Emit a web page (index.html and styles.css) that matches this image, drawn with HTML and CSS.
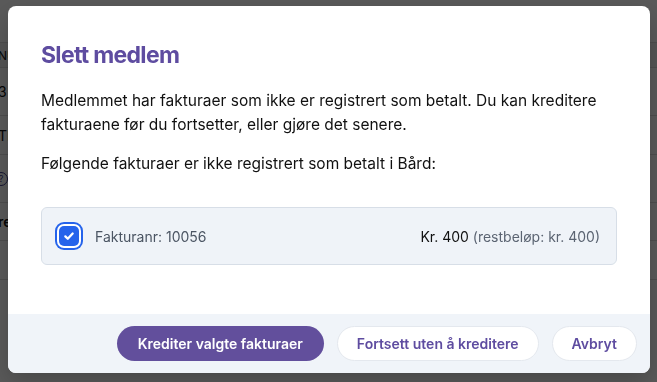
FILE: index.html
```html
<!DOCTYPE html>
<html lang="no">
<head>
  <meta charset="UTF-8">
  <meta name="viewport" content="width=device-width, initial-scale=1.0">
  <title>Slett medlem</title>
  <link rel="stylesheet" href="styles.css">
</head>
<body>
  <div class="page">
    <div class="row row-top"></div>
    <div class="row row-head">NUMMER</div>
    <div class="row row-tall">3</div>
    <div class="row">TI</div>
    <div class="row row-tall"><span class="help">?</span></div>
    <div class="row row-mid">re</div>
    <div class="row"></div>
  </div>

  <div class="backdrop"></div>

  <div class="modal">
    <div class="modal-body">
      <h2 class="modal-title">Slett medlem</h2>
      <p>Medlemmet har fakturaer som ikke er registrert som betalt. Du kan kreditere fakturaene før du fortsetter, eller gjøre det senere.</p>
      <p>Følgende fakturaer er ikke registrert som betalt i Bård:</p>

      <div class="invoice">
        <label class="invoice-check">
          <span class="checkbox">
            <svg viewBox="0 0 16 16" width="14" height="14"><path d="M3.8 8.4l2.8 2.8 5.6-6" fill="none" stroke="#fff" stroke-width="2.6" stroke-linecap="round" stroke-linejoin="round"/></svg>
          </span>
          <span class="invoice-no">Fakturanr: 10056</span>
        </label>
        <div class="invoice-amount">Kr. 400 <span class="rest">(restbeløp: kr. 400)</span></div>
      </div>
    </div>

    <div class="modal-footer">
      <button class="btn btn-primary">Krediter valgte fakturaer</button>
      <button class="btn btn-secondary">Fortsett uten å kreditere</button>
      <button class="btn btn-secondary">Avbryt</button>
    </div>
  </div>
</body>
</html>
```

FILE: styles.css
```css
body {
  margin: 0;
  font-family: Inter, "Noto Sans", sans-serif;
  background: #ffffff;
  color: #111111;
  height: 382px;
  overflow: hidden;
}

.page {
  font-size: 14px;
}

.row {
  height: 38px;
  border-bottom: 1px solid #dcdcdc;
  display: flex;
  align-items: center;
  margin-left: -2px;
}

.row-top {
  height: 42px;
}

.row-head {
  height: 24px;
  background: #f1f1f1;
  font-size: 12px;
}

.row-tall {
  height: 47px;
}

.row-mid {
  height: 37px;
  font-weight: 600;
}

.help {
  width: 12px;
  height: 12px;
  border: 1px solid #3b3b8a;
  border-radius: 50%;
  font-size: 9px;
  display: inline-flex;
  justify-content: center;
  align-items: center;
  margin-left: -4px;
  color: #3b3b8a;
}

.backdrop {
  position: fixed;
  inset: 0;
  background: rgba(0, 0, 0, 0.65);
}

.modal {
  position: fixed;
  top: 6px;
  left: 8px;
  width: 642px;
  height: 367px;
  background: #ffffff;
  border-radius: 8px;
  overflow: hidden;
  display: flex;
  flex-direction: column;
  box-shadow: 0 10px 25px rgba(0, 0, 0, 0.2);
}

.modal-body {
  flex: 1;
  padding: 35px 33px 0 33px;
}

.modal-title {
  margin: 0 0 20px;
  font-size: 23px;
  line-height: 28px;
  font-weight: 700;
  letter-spacing: -0.7px;
  color: #5e4ca0;
}

.modal-body p {
  margin: 0 0 15px;
  font-size: 15.5px;
  line-height: 24px;
  color: #111111;
}

.invoice {
  margin-top: 31px;
  box-sizing: border-box;
  height: 58px;
  background: #eff3f8;
  border: 1px solid #d7dee7;
  border-radius: 6px;
  display: flex;
  align-items: center;
  justify-content: space-between;
  padding: 0 16px;
}

.invoice-check {
  display: flex;
  align-items: center;
  gap: 16px;
}

.checkbox {
  width: 20px;
  height: 20px;
  margin-left: 1px;
  border-radius: 5px;
  background: #2563eb;
  box-shadow: 0 0 0 2px #ffffff, 0 0 0 4px #2563eb;
  display: flex;
  justify-content: center;
  align-items: center;
}

.invoice-no {
  font-size: 14px;
  color: #4b5563;
}

.invoice-amount {
  font-size: 14px;
  color: #111111;
}

.rest {
  color: #5b6472;
}

.modal-footer {
  height: 59px;
  background: #f0f4f9;
  display: flex;
  justify-content: flex-end;
  align-items: center;
  gap: 13px;
  padding: 0 13px;
}

.btn {
  height: 35px;
  border-radius: 18px;
  font-family: Inter, "Noto Sans", sans-serif;
  font-size: 14px;
  font-weight: 600;
  padding: 0 19px;
  white-space: nowrap;
  cursor: pointer;
}

.btn-primary {
  background: #624f9c;
  color: #ffffff;
  border: none;
  padding: 0 21px;
}

.btn-secondary {
  background: #ffffff;
  color: #5e4ca0;
  border: 1px solid #e4e8ee;
}
```
